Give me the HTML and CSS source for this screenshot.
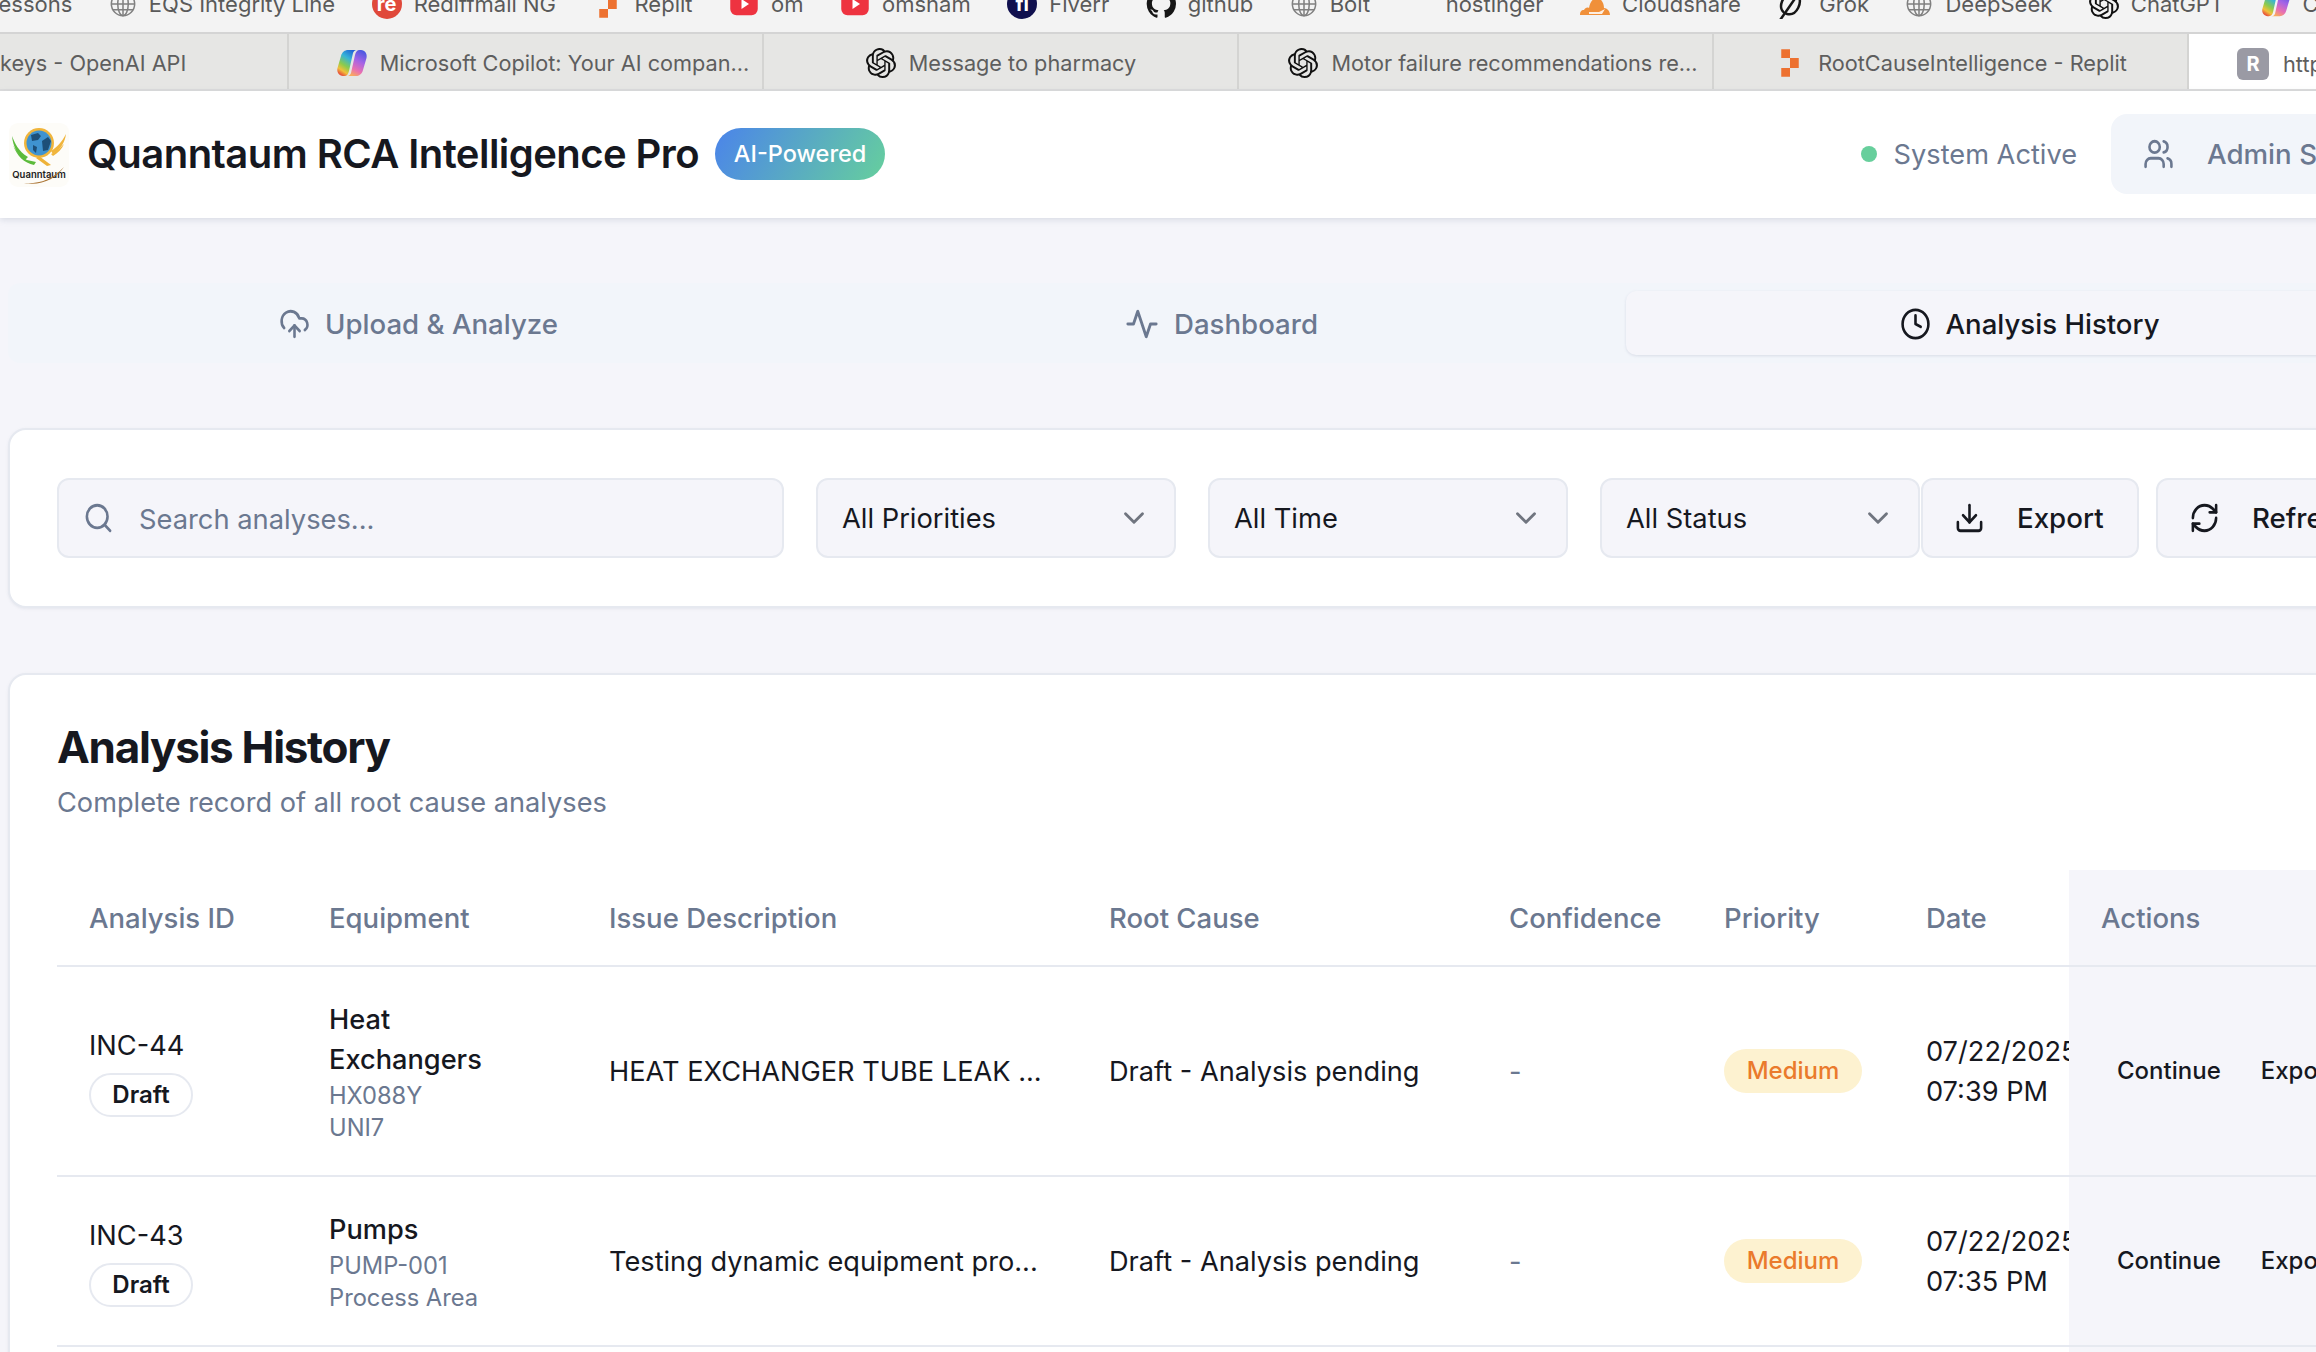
FILE: index.html
```html
<!DOCTYPE html>
<html lang="en">
<head>
<meta charset="utf-8">
<title>Quanntaum RCA Intelligence Pro</title>
<link rel="stylesheet" href="styles.css">
</head>
<body>
<svg class="defs" width="0" height="0" aria-hidden="true">
  <defs>
    <linearGradient id="cpa" x1="0.8" y1="0" x2="0.3" y2="1"><stop offset="0" stop-color="#1f5fd6"/><stop offset=".35" stop-color="#35b4d8"/><stop offset=".65" stop-color="#8ccb4c"/><stop offset=".85" stop-color="#f2c03a"/><stop offset="1" stop-color="#e8573c"/></linearGradient>
    <linearGradient id="cpb" x1="0.7" y1="0" x2="0.3" y2="1"><stop offset="0" stop-color="#4a58e0"/><stop offset=".4" stop-color="#a463e6"/><stop offset=".75" stop-color="#ea70b0"/><stop offset="1" stop-color="#f9ab5c"/></linearGradient>
    <symbol id="openai" viewBox="0 0 24 24"><path fill="currentColor" d="M22.2819 9.8211a5.9847 5.9847 0 0 0-.5157-4.9108 6.0462 6.0462 0 0 0-6.5098-2.9A6.0651 6.0651 0 0 0 4.9807 4.1818a5.9847 5.9847 0 0 0-3.9977 2.9 6.0462 6.0462 0 0 0 .7427 7.0966 5.98 5.98 0 0 0 .511 4.9107 6.051 6.051 0 0 0 6.5146 2.9001A5.9847 5.9847 0 0 0 13.2599 24a6.0557 6.0557 0 0 0 5.7718-4.2058 5.9894 5.9894 0 0 0 3.9977-2.9001 6.0557 6.0557 0 0 0-.7475-7.0729zm-9.022 12.6081a4.4755 4.4755 0 0 1-2.8764-1.0408l.1419-.0804 4.7783-2.7582a.7948.7948 0 0 0 .3927-.6813v-6.7369l2.02 1.1686a.071.071 0 0 1 .038.052v5.5826a4.504 4.504 0 0 1-4.4945 4.4944zm-9.6607-4.1254a4.4708 4.4708 0 0 1-.5346-3.0137l.142.0852 4.783 2.7582a.7712.7712 0 0 0 .7806 0l5.8428-3.3685v2.3324a.0804.0804 0 0 1-.0332.0615L9.74 19.9502a4.4992 4.4992 0 0 1-6.1408-1.6464zM2.3408 7.8956a4.485 4.485 0 0 1 2.3655-1.9728V11.6a.7664.7664 0 0 0 .3879.6765l5.8144 3.3543-2.0201 1.1685a.0757.0757 0 0 1-.071 0l-4.8303-2.7865A4.504 4.504 0 0 1 2.3408 7.872zm16.5963 3.8558L13.1038 8.364 15.1192 7.2a.0757.0757 0 0 1 .071 0l4.8303 2.7913a4.4944 4.4944 0 0 1-.6765 8.1042v-5.6772a.79.79 0 0 0-.407-.667zm2.0107-3.0231l-.142-.0852-4.7735-2.7818a.7759.7759 0 0 0-.7854 0L9.409 9.2297V6.8974a.0662.0662 0 0 1 .0284-.0615l4.8303-2.7866a4.4992 4.4992 0 0 1 6.6802 4.66zM8.3065 12.863l-2.02-1.1638a.0804.0804 0 0 1-.038-.0567V6.0742a4.4992 4.4992 0 0 1 7.3757-3.4537l-.142.0805L8.704 5.459a.7948.7948 0 0 0-.3927.6813zm1.0976-2.3654l2.602-1.4998 2.6069 1.4998v2.9994l-2.5974 1.4997-2.6067-1.4997Z"/></symbol>
    <symbol id="globe" viewBox="0 0 24 24"><g fill="none" stroke="currentColor" stroke-width="1.3"><circle cx="12" cy="12" r="10"/><ellipse cx="12" cy="12" rx="4.5" ry="10"/><path d="M12 2v20M2 12h20M3.4 7h17.2M3.4 17h17.2"/></g></symbol>
    <symbol id="replit" viewBox="0 0 24 24"><path fill="#ed7130" d="M5 1h7v7H5zM12 8h7v8h-7zM5 16h7v7H5z"/></symbol>
    <symbol id="yt" viewBox="0 0 24 24"><rect x="1" y="3" width="22" height="18" rx="5" fill="#ee3340"/><path fill="#fff" d="M10 8l6 4-6 4z"/></symbol>
    <symbol id="copilot" viewBox="0 0 32 28"><path fill="url(#cpa)" d="M12 1h9c-2.500 0-3.500 1.500-4 3L13 22c-.7 3-2 5-4.500 5H7c-4 0-6.500-4-5.500-8L5 7c1-4 4-6 7-6z"/><path fill="url(#cpb)" d="M20 27h-9c2.500 0 3.500-1.500 4-3l4-18c.7-3 2-5 4.500-5H25c4 0 6.500 4 5.500 8L27 21c-1 4-4 6-7 6z"/></symbol>
  </defs>
</svg>

<div class="bookmarks">
  <span class="bm bm-first">essons</span>
  <span class="bm"><svg class="bi globe"><use href="#globe"/></svg>EQS Integrity Line</span>
  <span class="bm"><span class="bi re">re</span>Rediffmail NG</span>
  <span class="bm"><svg class="bi"><use href="#replit"/></svg>Replit</span>
  <span class="bm"><svg class="bi"><use href="#yt"/></svg>om</span>
  <span class="bm"><svg class="bi"><use href="#yt"/></svg>omsham</span>
  <span class="bm"><span class="bi fi">fi</span>Fiverr</span>
  <span class="bm"><svg class="bi" viewBox="0 0 24 24"><path fill="#161616" d="M12 .5a11.500 11.500 0 0 0-3.600 22.400c.6.1.8-.2.8-.6v-2c-3.200.7-3.900-1.500-3.900-1.500-.5-1.300-1.300-1.700-1.300-1.700-1-.7.100-.7.100-.7 1.200.1 1.800 1.200 1.800 1.200 1 1.800 2.700 1.300 3.400 1 .1-.8.400-1.300.7-1.600-2.600-.3-5.300-1.300-5.300-5.700 0-1.300.5-2.300 1.200-3.100-.1-.3-.5-1.500.1-3.100 0 0 1-.3 3.200 1.200a11 11 0 0 1 5.800 0c2.200-1.500 3.200-1.200 3.200-1.200.6 1.600.2 2.800.1 3.100.7.800 1.200 1.800 1.200 3.100 0 4.400-2.700 5.400-5.300 5.700.4.400.8 1.100.8 2.200v3.200c0 .3.200.7.800.6A11.500 11.500 0 0 0 12 .5z"/></svg>github</span>
  <span class="bm"><svg class="bi globe"><use href="#globe"/></svg>Bolt</span>
  <span class="bm bm-host">hostinger</span>
  <span class="bm"><svg class="bi" viewBox="0 0 30 30"><path fill="#f0903a" d="M0 26c0-3 1-5 4-5 1-2 3-3 5-2 1-6 4-10 8-10 4 0 7 5 7 10 3 0 6 3 6 7z"/><path fill="#fff" d="M9 23h10l6-3-3 5H9z" opacity=".85"/></svg>Cloudshare</span>
  <span class="bm"><svg class="bi" viewBox="0 0 24 24"><g fill="none" stroke="#161616" stroke-width="2"><path d="M8 20c-4-1-6-5-4-10 2-5 7-8 11-6 4 2 4 7 2 11-2 4-5 6-9 5z"/><path d="M1 27L19 1"/></g></svg>Grok</span>
  <span class="bm"><svg class="bi globe"><use href="#globe"/></svg>DeepSeek</span>
  <span class="bm"><svg class="bi ink"><use href="#openai"/></svg>ChatGPT</span>
  <span class="bm"><svg class="bi"><use href="#copilot"/></svg>Copilot</span>
</div>

<div class="tabstrip">
  <div class="ctab ctab-first"><span class="ctab-text">keys - OpenAI API</span></div>
  <div class="ctab ctab-long"><svg class="ti"><use href="#copilot"/></svg><span class="ctab-text">Microsoft Copilot: Your AI compan...</span></div>
  <div class="ctab"><svg class="ti ink"><use href="#openai"/></svg><span class="ctab-text">Message to pharmacy</span></div>
  <div class="ctab ctab-long"><svg class="ti ink"><use href="#openai"/></svg><span class="ctab-text">Motor failure recommendations re...</span></div>
  <div class="ctab"><svg class="ti"><use href="#replit"/></svg><span class="ctab-text">RootCauseIntelligence - Replit</span></div>
  <div class="ctab ctab-active"><span class="ti r-tile">R</span><span class="ctab-text">https://replit.com</span></div>
</div>

<div class="page">
  <header class="topbar">
    <div class="brand">
      <svg class="logo" viewBox="0 0 60 64">
        <rect width="60" height="64" rx="9" fill="#fdfcf8"/>
        <path d="M3 13c3 7 6 15 16 21l-3 3C9 33 4 24 3 13z" fill="#5cbb3c"/>
        <path d="M4 22c3 6 7 11 14 15l9 2-2 3C15 40 8 33 4 22z" fill="#5cbb3c"/>
        <circle cx="30" cy="20" r="15" fill="#f0b53c"/>
        <circle cx="30" cy="20" r="12.500" fill="#3f93d0"/>
        <path d="M22 12l7-2 3 3-3 4-6 1zM33 18l6-4 3 4-3 9-5 1zM24 22l4 2-1 6-3-3z" fill="#1d4f78"/>
        <path d="M30 33l12 9-4 1-11-8z" fill="#eeb238"/>
        <path d="M57 11c-1 8-5 15-13 20l-2-3c6-4 11-9 15-17z" fill="#f0b53c"/>
        <path d="M55 21c-2 5-6 9-11 12l-2-2c5-2 9-6 13-10z" fill="#f0b53c"/>
        <text x="30" y="54.500" class="logo-text" text-anchor="middle">Quanntaum</text>
        <path d="M15 60c15 1 28-3 40-16-8 12-23 19-40 16z" fill="#a9712f"/>
      </svg>
      <h1 class="app-title">Quanntaum RCA Intelligence Pro</h1>
      <span class="ai-badge">AI-Powered</span>
    </div>
    <div class="top-right">
      <span class="status"><i class="dot"></i>System Active</span>
      <div class="user-box">
        <svg class="ico" viewBox="0 0 24 24" preserveAspectRatio="none"><path d="M16 21v-2a4 4 0 0 0-4-4H6a4 4 0 0 0-4 4v2"/><circle cx="9" cy="7" r="4"/><path d="M22 21v-2a4 4 0 0 0-3-3.870M16 3.130a4 4 0 0 1 0 7.750"/></svg>
        <span>Admin Smith</span>
      </div>
    </div>
  </header>

  <main class="content">
    <nav class="tabs">
      <div class="tab tab-first"><svg class="ico" viewBox="0 0 24 24" preserveAspectRatio="none"><path d="M12 13v8"/><path d="M4 14.900A7 7 0 1 1 15.710 8h1.790a4.500 4.500 0 0 1 2.500 8.240"/><path d="m8 17 4-4 4 4"/></svg>Upload &amp; Analyze</div>
      <div class="tab"><svg class="ico ico-wide" viewBox="0 0 24 24" preserveAspectRatio="none"><path d="M22 12h-4l-3 9L9 3l-3 9H2"/></svg>Dashboard</div>
      <div class="tab tab-active"><svg class="ico" viewBox="0 0 24 24" preserveAspectRatio="none"><circle cx="12" cy="12" r="10"/><path d="M12 6v6l4 2"/></svg>Analysis History</div>
    </nav>

    <section class="card filters">
      <div class="search"><svg class="ico" viewBox="0 0 24 24" preserveAspectRatio="none"><circle cx="11" cy="11" r="8"/><path d="m21 21-4.300-4.300"/></svg><span class="search-text">Search analyses...</span></div>
      <div class="select sel-a"><span>All Priorities</span><svg class="chev" viewBox="0 0 24 24"><path d="m6 9 6 6 6-6"/></svg></div>
      <div class="select sel-a"><span>All Time</span><svg class="chev" viewBox="0 0 24 24"><path d="m6 9 6 6 6-6"/></svg></div>
      <div class="select sel-b"><span>All Status</span><svg class="chev" viewBox="0 0 24 24"><path d="m6 9 6 6 6-6"/></svg></div>
      <div class="actions-group">
        <div class="btn btn-export"><svg class="ico" viewBox="0 0 24 24" preserveAspectRatio="none"><path d="M21 15v4a2 2 0 0 1-2 2H5a2 2 0 0 1-2-2v-4"/><path d="m7 10 5 5 5-5"/><path d="M12 15V3"/></svg>Export</div>
        <div class="btn"><svg class="ico" viewBox="0 0 24 24" preserveAspectRatio="none"><path d="M3 12a9 9 0 0 1 9-9 9.750 9.750 0 0 1 6.740 2.740L21 8"/><path d="M21 3v5h-5"/><path d="M21 12a9 9 0 0 1-9 9 9.750 9.750 0 0 1-6.740-2.740L3 16"/><path d="M8 16H3v5"/></svg>Refresh</div>
      </div>
    </section>

    <section class="card history">
      <h2 class="h-title">Analysis History</h2>
      <p class="h-sub">Complete record of all root cause analyses</p>
      <table class="tbl">
        <colgroup>
          <col class="c1"><col class="c2"><col class="c3"><col class="c4"><col class="c5"><col class="c6"><col class="c7"><col class="c8">
        </colgroup>
        <thead>
          <tr><th>Analysis ID</th><th>Equipment</th><th>Issue Description</th><th>Root Cause</th><th>Confidence</th><th>Priority</th><th>Date</th><th class="act">Actions</th></tr>
        </thead>
        <tbody>
          <tr class="row-a">
            <td><div class="inc">INC-44</div><span class="draft">Draft</span></td>
            <td><div class="eq">Heat Exchangers</div><div class="sub">HX088Y</div><div class="sub">UNI7</div></td>
            <td>HEAT EXCHANGER TUBE LEAK ...</td>
            <td>Draft - Analysis pending</td>
            <td class="muted">-</td>
            <td class="pill-cell"><span class="pill">Medium</span></td>
            <td class="date">07/22/2025<br>07:39 PM</td>
            <td class="act btn-cell"><div class="row-btns"><span>Continue</span><span>Export</span></div></td>
          </tr>
          <tr class="row-b">
            <td><div class="inc">INC-43</div><span class="draft">Draft</span></td>
            <td><div class="eq">Pumps</div><div class="sub">PUMP-001</div><div class="sub">Process Area</div></td>
            <td>Testing dynamic equipment pro...</td>
            <td>Draft - Analysis pending</td>
            <td class="muted">-</td>
            <td class="pill-cell"><span class="pill">Medium</span></td>
            <td class="date">07/22/2025<br>07:35 PM</td>
            <td class="act btn-cell"><div class="row-btns"><span>Continue</span><span>Export</span></div></td>
          </tr>
          <tr class="row-c"><td></td><td></td><td></td><td></td><td></td><td></td><td></td><td class="act"></td></tr>
        </tbody>
      </table>
    </section>
  </main>
</div>
</body>
</html>
```

FILE: styles.css
```css
* { box-sizing: border-box; }
html, body { margin: 0; height: 1352px; overflow: hidden; background: #f5f5fa; }
body { font-family: Inter, "Liberation Sans", sans-serif; color: #16181f; width: 2316px; }
.defs { position: absolute; }

.bookmarks { height: 34px; background: #f3f3f3; border-bottom: 2px solid #d4d4d4; display: flex; align-items: flex-end; gap: 36.500px; padding: 0 0 13px 0; overflow: hidden; white-space: nowrap; font: 22px Inter, sans-serif; color: #5a5a5a; width: 2340px; }
.bm { display: inline-flex; align-items: center; gap: 12px; flex: none; line-height: 30px; height: 30px; }
.bm-first { margin-left: -1.500px; }
.bm-host { margin-left: 39px; }
.bi { width: 30px; height: 30px; flex: none; display: inline-block; }
.bi.globe { color: #808080; width: 28px; height: 28px; }
.bi.ink { color: #111; }
.bi.re { background: #e0483a; color: #fff; border-radius: 50%; font: bold 20px/30px Inter, sans-serif; text-align: center; }
.bi.fi { background: #10104e; color: #fff; border-radius: 50%; font: bold 20px/30px Inter, sans-serif; text-align: center; }

.tabstrip { height: 57px; background: #e6e6e4; border-bottom: 2px solid #dcdcdc; display: flex; white-space: nowrap; font: 21.700px Inter, sans-serif; color: #5e5e5e; overflow: hidden; }
.ctab { width: 475px; flex: none; display: flex; align-items: center; justify-content: center; gap: 12px; border-right: 2px solid #d4d4d2; padding: 2px 10px 0; }
.ctab-first { width: 289px; justify-content: flex-start; padding-left: 0; }
.ctab-long { padding-left: 44px; }
.ctab-active { background: #fff; justify-content: flex-start; padding-left: 48px; border: 0; margin-bottom: -2px; gap: 14px; }
.ctab-text { flex: none; }
.ti { width: 32px; height: 30px; flex: none; }
.ti.ink { color: #111; }
.r-tile { height: 32px; background: #9a9aa4; color: #fff; border-radius: 6px; font: bold 20px/32px Inter, sans-serif; text-align: center; }

.page { width: 2720px; }
.topbar { height: 127px; background: #fff; box-shadow: 0 2px 6px rgba(120, 130, 160, .22); display: flex; align-items: center; justify-content: space-between; padding: 0 0 0 9px; position: relative; width: 2720px; }
.brand { display: flex; align-items: center; }
.logo { width: 60px; height: 64px; flex: none; margin-right: 18px; }
.logo-text { font: 600 9.500px Inter, sans-serif; fill: #222; }
.app-title { font: 600 40px/1.2 Inter, sans-serif; letter-spacing: -.55px; color: #16181f; margin: -2px 16px 0 0; white-space: nowrap; }
.ai-badge { width: 170px; height: 52px; flex: none; border-radius: 26px; background: linear-gradient(120deg, #4b84ea, #66cf9d); color: #fff; font: 500 23.500px/52px Inter, sans-serif; text-align: center; margin-top: -2px; }
.top-right { display: flex; align-items: center; gap: 34px; }
.status { display: inline-flex; align-items: center; gap: 17px; font-size: 27.200px; color: #6b7890; margin-top: -1px; }
.dot { width: 16px; height: 16px; border-radius: 50%; background: #67cf9c; display: block; }
.user-box { width: 609px; height: 80px; background: #f2f5fa; border-radius: 16px; display: flex; align-items: center; gap: 33px; padding-left: 32px; font-size: 27.700px; font-weight: 500; color: #6b7890; margin-top: -1px; }

.ico { width: 31px; height: 34px; flex: none; fill: none; stroke: currentColor; stroke-width: 2; stroke-linecap: round; stroke-linejoin: round; }
.ico-wide { width: 34px; }

.content { padding: 65px 0 0 8px; width: 2435px; }
.tabs { height: 80px; background: #f2f5fa; border-radius: 12px; display: grid; grid-template-columns: repeat(3, 1fr); align-items: center; font-size: 27.600px; font-weight: 500; color: #6b7890; }
.tab { height: 64px; display: flex; align-items: center; justify-content: center; gap: 15px; border-radius: 10px; padding-top: 1px; }
.tab-first { padding-left: 12px; }
.tab-active { background: #f5f5fa; color: #16181f; box-shadow: 0 1px 3px rgba(120, 130, 160, .2); padding-right: 2px; }

.card { background: #fff; border: 2px solid #e6e9f0; border-radius: 18px; box-shadow: 0 1px 3px rgba(120, 130, 160, .12); }
.filters { margin-top: 65px; height: 180px; display: flex; align-items: center; padding: 0 47px; }
.search, .select, .btn { height: 80px; background: #f5f5fa; border: 2px solid #e6e9f0; border-radius: 12px; display: flex; align-items: center; flex: none; font-size: 27.300px; }
.search { width: 727px; padding-left: 24px; gap: 25px; color: #6b7890; font-weight: 400; }
.search-text { padding-top: 2px; }
.select { padding: 0 23px 0 24px; justify-content: space-between; margin-left: 32px; }
.sel-a { width: 360px; }
.sel-b { width: 320px; }
.chev { width: 34px; height: 34px; fill: none; stroke: #70757f; stroke-width: 2; stroke-linecap: round; stroke-linejoin: round; }
.actions-group { display: flex; gap: 17px; margin-left: 1px; }
.btn { padding: 0 31px; gap: 32px; font-weight: 500; font-size: 27.700px; }
.btn-export { width: 218px; }

.history { margin-top: 65px; height: 900px; padding: 47px 0 0 47px; }
.h-title { font: 700 44px/1.2 Inter, sans-serif; letter-spacing: -1.300px; margin: -1px 0 0; }
.h-sub { font-size: 27.200px; line-height: 36px; color: #6b7890; margin: 11px 0 0; }

.tbl { border-collapse: collapse; table-layout: fixed; width: 2370px; margin-top: 49px; font-size: 27.200px; }
.c1 { width: 240px; } .c2 { width: 280px; } .c3 { width: 500px; } .c4 { width: 400px; } .c5 { width: 215px; } .c6 { width: 202px; } .c7 { width: 175px; } .c8 { width: 358px; }
.tbl th { height: 96px; text-align: left; font-size: 27.500px; font-weight: 500; color: #6b7890; padding: 1px 0 0 32px; border-bottom: 2px solid #e6e9f0; }
.tbl td { padding: 2px 0 0 32px; border-bottom: 2px solid #e6e9f0; vertical-align: middle; overflow: hidden; white-space: nowrap; }
.tbl td.pill-cell, .tbl td.btn-cell { padding-top: 0; }
.row-a td { height: 210px; }
.row-b td { height: 170px; }
.row-c td { height: 100px; border-bottom: 0; }
.tbl .act { background: #f5f5fa; }
.inc { line-height: 40px; }
.draft { display: inline-block; height: 44px; width: 104px; margin-top: 7px; border: 2px solid #e6e9f0; border-radius: 22px; background: #fff; font-size: 24px; font-weight: 600; line-height: 40px; text-align: center; }
.tbl .eq { white-space: normal; line-height: 40px; font-weight: 500; width: 180px; }
.sub { font-size: 23.700px; line-height: 32px; color: #6b7890; }
.muted { color: #6b7890; }
.pill { display: inline-block; width: 138px; height: 44px; border-radius: 22px; background: #fdf2d0; color: #ea7a2c; font-size: 24px; font-weight: 500; line-height: 44px; text-align: center; }
.date { line-height: 40px; }
.row-btns { display: flex; gap: 40px; padding-left: 16px; font-size: 24px; font-weight: 500; }
```
